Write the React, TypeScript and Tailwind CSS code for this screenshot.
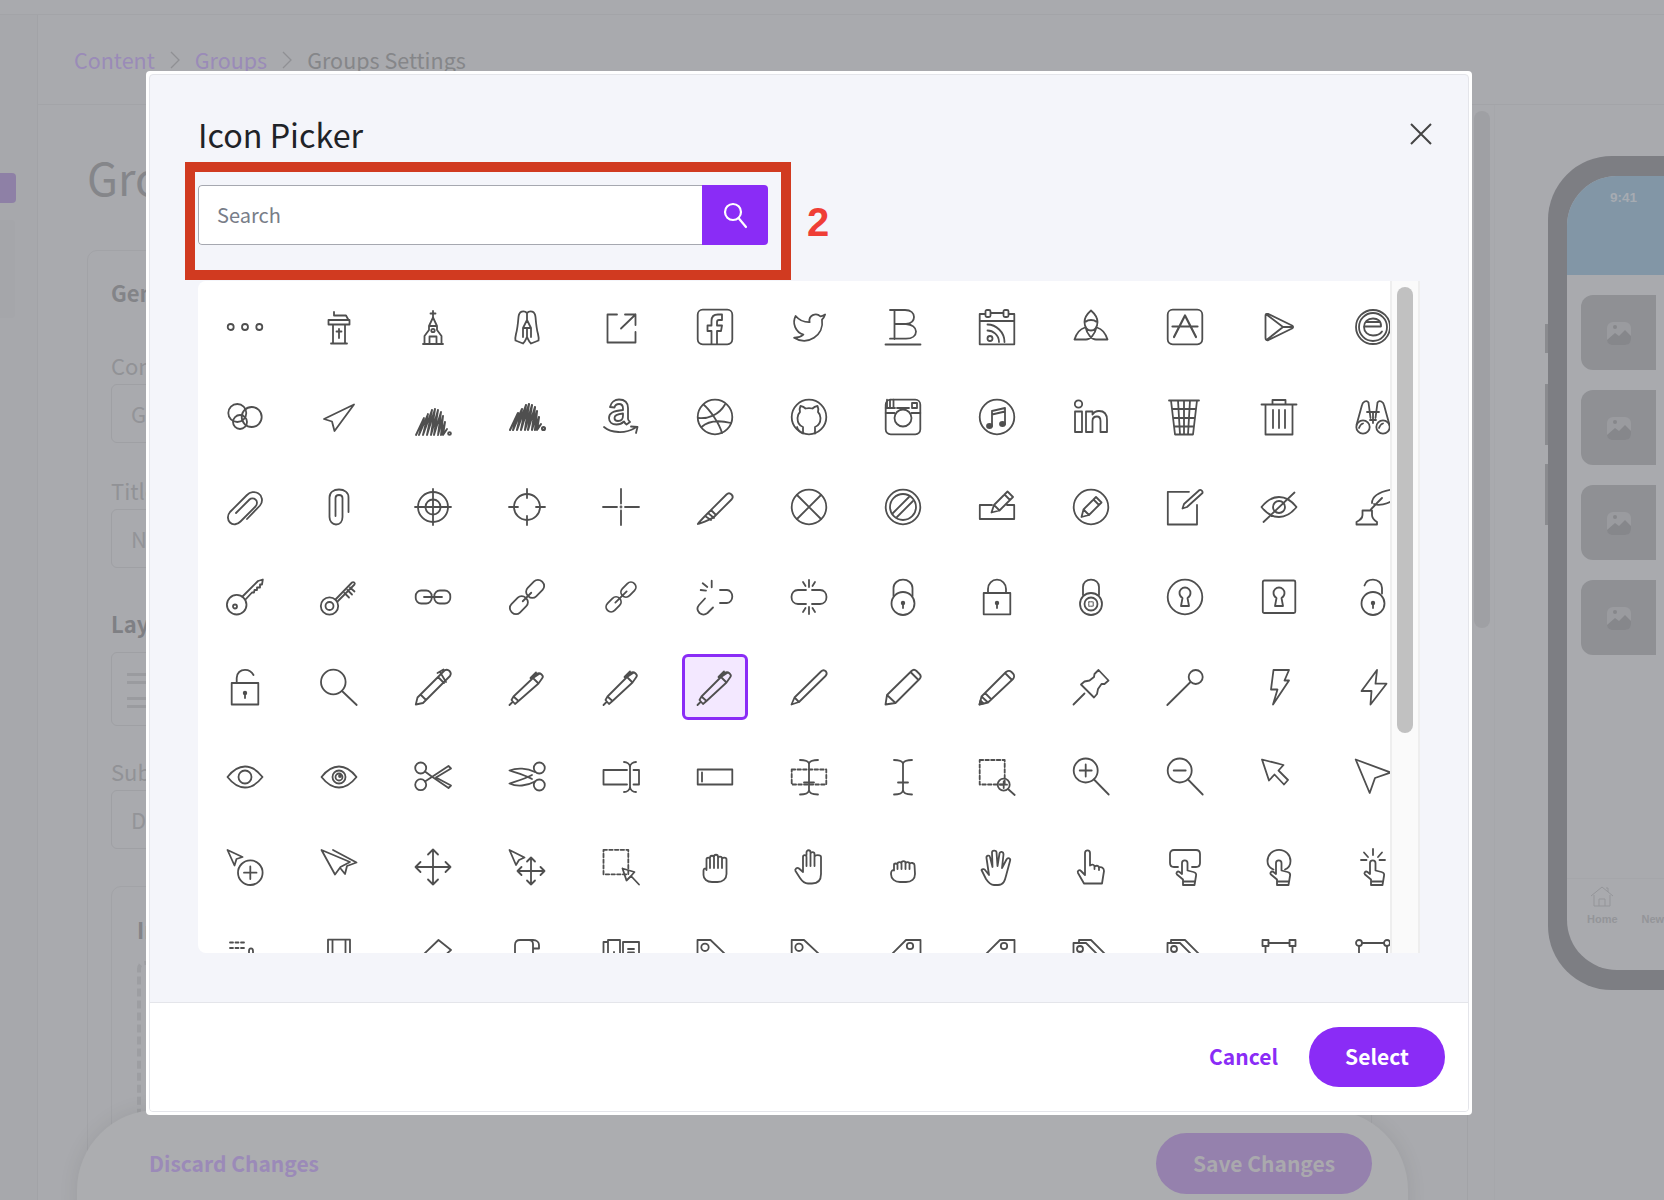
import React from "react";

const D = ({ d }: { d: string }) => <path d={d} />;
const C = ({ x = 18, y = 18, r }: { x?: number; y?: number; r: number }) => <circle cx={x} cy={y} r={r} />;
const Hole = ({ x = 18, y = 24 }: { x?: number; y?: number }) => (
  <g>
    <circle cx={x} cy={y} r={1.3} fill="#4f4f4f" />
    <path d={`M${x} ${y}v5`} strokeWidth={1.8} />
  </g>
);
const Keyhole = () => <D d="M15.5 19 C13 17.5 12.5 15.5 12.5 14 C12.5 11 15 8.5 18 8.5 C21 8.5 23.5 11 23.5 14 C23.5 15.5 23 17.5 20.5 19 L22 27 H14 Z" />;
const FINGER = "M16 30.5 L10 25.5 C8.5 24 10.5 21.5 12.5 23 L15 25 V14 C15 10.5 20.5 10.5 20.5 14 V21.5 L26.5 23 C28.5 23.5 29.5 25 29 27 L27.5 36 H16 Z M16.5 32.5 H28";
const SCRIBBLE = "M1 36 L9 19 L4 36 L13 15 L8 36 L17 11 L12 36 L20 10 L16 36 L23 11 L19 36 L26 13 L23 36 L28 17 L26 36 L30 23 L28 36 L32 30";

const icons: React.ReactNode[] = [
  // row 1
  <><C x={3.7} r={3} /><C r={3} /><C x={32.3} r={3} /></>,
  <D d="M13 3v3.5 M13 6.5h12l2.5 4.5 M7.5 11h21v4.5h-21z M12 15.5V34 M24 15.5V34 M10 34.5h16 M18 20v9 M15.5 22.5h5" />,
  <><D d="M18 2v7 M15.5 4.5h5 M18 8.5L14 17V21L9.5 27V35 M18 8.5L22 17V21L26.5 27V35 M8 35h20 M14.5 35V27.5h7V35 M14 17h8" /><C y={21.5} r={1.7} /></>,
  <D d="M18 4C15 1 10 2 9.5 8C9 14 8.5 20 7 25C6.5 27 6 29 6.5 31.5L14 34.5C16 33 17 30 18 28C19 30 20 33 22 34.5L29.5 31.5C30 29 29.5 27 29 25C27.5 20 27 14 26.5 8C26 2 21 1 18 4Z M18 4V11 M18 11L14 19V28 M18 11L22 19V28 M14 19H22 M18 19V28" />,
  <D d="M14 5.5H4.5V33.5H32.5V23 M32.5 5.5L18 19.5 M22 5.5H32.5V16" />,
  <><rect x={0.7} y={0.7} width={34.6} height={34.6} rx={5} /><D d="M14.5 35V22H10.5V16.5H14.5V12C14.5 7.5 17 5.5 21 5.5H25V11H22C20.5 11 20 12 20 13V16.5H25L24 22H20V35" /></>,
  <path transform="scale(1.55) translate(0 -0.5)" strokeWidth={1.15} d="M22 4s-.7 2.1-2 3.4c1.6 10-9.4 17.3-18 11.6 2.2.1 4.4-.6 6-2C3 15.5.5 9.6 3 5c2.2 2.6 5.6 4.1 9 4-.9-4.2 4-6.6 7-3.8 1.1 0 3-1.2 3-1.2z" />,
  <D d="M5 1h15c6 0 9 3.2 9 7 0 3.8-3 6.5-8 7 6 .3 10 3.5 10 7.5 0 4-3.5 7.2-10 7.2H5 M9.5 1v29 M9.5 15h11 M.5 35.5h35" />,
  <><D d="M6 5H.7V35.3H35.3V5H30 M12 4H24 M.7 12H35.3 M8.5 15.5C17 15.5 25.5 23 25.5 33 M8.5 21.5C14 21.5 20 26 20 33" /><rect x={6.5} y={1} width={5} height={7} rx={1.5} /><rect x={24.5} y={1} width={5} height={7} rx={1.5} /><C x={11} y={29.5} r={2.5} /></>,
  <D d="M18 1.5C14 5 11.5 9 11.5 13C11.5 18.5 14.5 21.5 18 21.5C21.5 21.5 24.5 18.5 24.5 13C24.5 9 22 5 18 1.5Z M1.5 30.5H13C17 30.5 22 25.5 23.5 18 M34.5 30.5H23C19 30.5 14 25.5 12.5 18 M1.5 30.5C3.5 24 7 20 12 18.5 M34.5 30.5C32.5 24 29 20 24 18.5 M13 12.5C15 10.5 21 10.5 23 12.5" />,
  <><rect x={0.7} y={0.7} width={34.6} height={34.6} rx={5} /><path strokeWidth={2.2} d="M7 28L18 6.5L29 28 M5.5 17.5H30.5" /></>,
  <D d="M5.5 5C4.5 5 4.5 6 4.5 7V29C4.5 31 6 32 7.5 31L31 19.5C32.5 18.5 32.5 17.5 31 16.5L7.5 5Z M5.5 5.5L22 18L5.5 31 M22 18H32" />,
  <><C r={17} /><C r={14} /><D d="M9 17.5H26C26.5 12 22.5 9.5 18 9.5C12.5 9.5 9 13 9 18C9 23 13 26.5 18 26.5C21.5 26.5 25 25.5 27 22.5 M11.5 13H24" /></>,
  // row 2
  <><C x={10.3} y={14} r={9} /><C x={24.7} y={18} r={10} /><C x={13} y={23} r={7} /></>,
  <D d="M33 5.5L3 20L11 22.5L13.5 32Z" />,
  <g strokeWidth={1.9}><D d={SCRIBBLE} /><C x={34.5} y={34.5} r={1.4} /></g>,
  <g transform="translate(0 -5)" strokeWidth={2.1}><D d={SCRIBBLE} /><C x={34.5} y={34.5} r={1.5} /></g>,
  <D d="M7 8C8 3 12 .5 16 .5C22 .5 25 3.5 25 9V20C25 21 26 22 27 23L23.5 25.5C22 24.5 21.5 23.5 21 22.5C19 24.5 16.5 25.5 13.5 25.5C9 25.5 6 23 6 19C6 14 10 12 20 11V9.5C20 6.5 18.5 5 16 5C13.5 5 12 6.5 11.5 8.5Z M20 14.5C14 15 11.5 16.5 11.5 19C11.5 21 13 22 15 22C18 22 20 20 20 16.5Z M1 28C8 34 22 35 32 29 M28 27.5L34.5 28L33 34" />,
  <><C r={17.3} /><D d="M6.5 5.5C13 11 22 24 25 34 M.8 19C11 20 22 16 28 5.5 M4.5 28C11 22 22 21 34 24" /></>,
  <><C r={17.3} /><D d="M12 34.5C9 33 6.5 30 6 28 M12 34.5V28C9 27 6.5 24 6.5 19C6.5 16.5 7.5 14.5 9 13C8.5 11 8.5 9 9.5 7C12 7.5 13.5 8.5 14.5 9.5C16.5 9 19.5 9 21.5 9.5C22.5 8.5 24 7.5 26.5 7C27.5 9 27.5 11 27 13C28.5 14.5 29.5 16.5 29.5 19C29.5 24 27 27 24 28V34.5" /></>,
  <><rect x={0.7} y={0.7} width={34.6} height={34.6} rx={5} /><C y={19} r={8.5} /><D d="M.7 14H9.5 M26.5 14H35.3 M5 .7V9 M8.5 .7V9 M2 .7V9 M.7 9H10 M12 9H24" /><rect x={27} y={4} width={5} height={5} /></>,
  <><C r={17.3} /><D d="M13 12L26 9V25 M13 12V27 M13 15.5L26 12.5" /><ellipse cx={10.5} cy={27} rx={2.5} ry={2} fill="#4f4f4f" /><ellipse cx={23.5} cy={25} rx={2.5} ry={2} fill="#4f4f4f" /></>,
  <><C x={5.5} y={5} r={3.7} /><D d="M2 12.5H9V33H2Z M13 12.5H19.5V15.5C21 13 23.5 12 26 12C31.5 12 34 15.5 34 21V33H27.5V22C27.5 19.5 26.5 17.5 24 17.5C21 17.5 19.5 19.5 19.5 22V33H13Z" /></>,
  <D d="M2 1.5H32 M4 1.5L8 35.5H26L30 1.5 M5 10H29 M6 19H28 M7 27.5H27 M11 1.5L13 35.5 M17 1.5V35.5 M23 1.5L21 35.5" />,
  <D d="M.5 5.5H35.5 M11.5 5.5V1H24.5V5.5 M4.5 5.5V35.5H31.5V5.5 M12 11V29 M18 11V29 M24 11V29" />,
  <><C x={8} y={28} r={6.7} /><C x={28} y={28} r={6.7} /><D d="M1.5 26L7 6C7.5 3 11.5 .5 13.5 3.5L15.5 19 M34.5 26L29 6C28.5 3 24.5 .5 22.5 3.5L20.5 19 M12 13H24 M15 21H21 M18 13V24 M4 29C5 26 6 25 8 24.5 M24 29C25 26 26 25 28 24.5" /></>,
  // row 3
  <D d="M20 30L33 16.5C36.5 12.5 35 6.5 31.5 4.5C28 2 23 3 20 6L3 23C0 26.5 .5 31 3 33.5C6 36.5 10.5 35.5 13.5 32.5L28.5 17.5C30.5 15 30.5 12 28.5 10.5C27 9 24 9 22.5 10.5L9 24" />,
  <D d="M27.5 23V8.5C27.5 3.5 23.5 .5 18 .5C12.5 .5 8.5 3.5 8.5 8.5V28C8.5 32.5 11.5 35.5 15 35.5C19 35.5 21.5 32.5 21.5 28V9C21.5 7 20 6 18 6C16 6 14.5 7 14.5 9V27" />,
  <><C r={15} /><C r={7.5} /><D d="M18 0V36 M0 18H36" /></>,
  <><C r={13} /><D d="M18 0V9 M18 27V36 M0 18H9 M27 18H36" /></>,
  <><C r={0.5} /><D d="M18 0V14.5 M18 21.5V36 M0 18H14 M22 18H36" /></>,
  <D d="M.8 35C7 33 14 31 18 27L34.5 10.5C36 9 36 7 34.5 5.5C33 4 31 4 29.5 5.5L11 24C6.5 28.5 3 32 .8 35Z M11 24L17 29 M14 21L19 26 M8 27L14 31" />,
  <><C r={17.3} /><D d="M6 6L30 30 M30 6L6 30" /></>,
  <><C r={17.3} /><C r={13} /><D d="M8 24L24 8 M12 28L28 12" /></>,
  <D d="M13 16H.8V30H35.2V16H28 M12.5 23.5L15 16L28.5 2.5L34 8L20.5 21.5Z M25.5 5.5L31 11 M15 16L20.5 21.5" />,
  <><C r={17.3} /><D d="M8.5 28L10.5 20.5L23 8L28.5 13.5L16 26Z M20.5 10.5L26 16 M10.5 20.5L16 26" /></>,
  <D d="M22 2.8H.8V35.5H30V16 M15.5 19.5L17 15L32.5 1C34 .5 36 2 35.5 4L20 18Z" />,
  <><D d="M.5 18C6 11 12 8 18 8C24 8 30 11 35.5 18C30 25 24 28 18 28C12 28 6 25 .5 18Z M33.5 3.5L2.5 33" /><C r={6} /></>,
  <D d="M1.5 35.5H22V33C19 31 17 29.5 17 26V21.5H7.5V26C7.5 29.5 5 31 1.5 33Z M15 21.5C18 18 22 14 27 9 M17 14C17 8 23 3 37 .5 M37 12C32 15 24 17 19 15" />,
  // row 4
  <><C x={9.7} y={25.7} r={9.8} /><C x={8} y={27.5} r={2} /><D d="M15.5 17.5L31 2L35.8 .5L35 5.5H33V8.5H30V11H27.5L27 13.5H25L18.5 20.5" /></>,
  <><C x={8.5} y={27} r={8.7} /><C x={8.5} y={27} r={4} /><D d="M14.5 20.5L31 3.5C32.5 2.5 34.5 4 33.5 5.5L16.5 22.5 M23.5 14L28 18.5 M26.5 11L31 15.5 M29 8.5L33.5 12.5" /></>,
  <><rect x={0.7} y={11.5} width={16} height={13} rx={5.5} /><rect x={19.3} y={11.5} width={16} height={13} rx={5.5} /><D d="M9 18H27" /></>,
  <g transform="rotate(-45 18 18)"><rect x={-3.5} y={12} width={20} height={12} rx={5.5} /><rect x={19.5} y={12} width={20} height={12} rx={5.5} /><path d="M12 18H24" /></g>,
  <g transform="rotate(-45 18 18)"><rect x={-1} y={13} width={17} height={10} rx={5} /><rect x={20} y={13} width={17} height={10} rx={5} /><path d="M10 18H26" /></g>,
  <D d="M23 11H30C33 11 35.3 14 35.3 17.5C35.3 21 33 24 30 24H23 M8 19.5L2 26C-.5 29 .5 32 2.5 34C5 36 8 36 10.5 34L16 28.5 M14.7 1.7V8.3 M5.7 4.3L10.3 8 M3.7 11L9 11.7" />,
  <D d="M15 11H7C3 11 .5 14 .5 18C.5 22 3 25 7 25H15 M21 11H29C33 11 35.5 14 35.5 18C35.5 22 33 25 29 25H21 M18 1V8 M12 3L14.5 7 M24 3L21.5 7 M18 28V35 M12 33L14.5 29 M24 33L21.5 29" />,
  <><C y={24.5} r={11.5} /><D d="M8.5 17V9C8.5 4 13 .7 18 .7C23 .7 27.5 4 27.5 9V17" /><Hole /></>,
  <><D d="M4.7 14H31.3V35.3H4.7Z M9 14V10C9 4.5 13 .7 18 .7C23 .7 27 4.5 27 10V14" /><Hole /></>,
  <><C y={25} r={11} /><C y={25} r={6.5} /><D d="M10 16V8C10 3.5 13.5 .7 18 .7C22.5 .7 26 3.5 26 8V16" /><rect x={15.8} y={22.8} width={4.4} height={4.4} strokeWidth={1} strokeDasharray="1.2 0.8" /></>,
  <><C r={17.3} /><Keyhole /></>,
  <><rect x={1.8} y={1.5} width={32.5} height={32.5} rx={1.5} /><Keyhole /></>,
  <><C y={24.5} r={11.5} /><D d="M9.5 6.5C10.5 3 13.5 .7 18 .7C23 .7 27 4 27 9V14.5" /><Hole /></>,
  // row 5
  <><D d="M4.7 14H31.3V35.5H4.7Z M9.7 14V9C9.7 4 13.5 .8 18 .8C22 .8 25 3 26.5 6" /><Hole /></>,
  <><C x={12.3} y={13} r={12.3} /><D d="M21 22L35.7 36" /></>,
  <D d="M.8 35.5L2.5 28.5L5.5 25.5L11 31L8 34Z M5.5 25.5L25 6 M11 31L31 11 M25 6L29.5 1.5C31 .5 33 .5 34.5 2C36 3.5 36 5.5 35 7L31 11 M23 8L29 14 M22.5 4L28.5 .5 M25 3L31 13" />,
  <D d="M.5 36L3 33.5 M2.5 31L6 35L9.5 32L4.5 27.5Z M4.5 27.5L24 9L29.5 14.5L9.5 32 M24 9L28 5C29 4 31 4 32 5L33 6C34 7 34 8.5 33 9.5L29.5 14.5 M21.5 9L27 3.5 M24 9L30 5" />,
  <D d="M.5 36L3 33.5 M2.5 31L6 35L9.5 32L4.5 27.5Z M4.5 27.5L24 8L29.5 13.5L9.5 32 M24 8L28 4C29 3 31 3 32 4L33 5C34 6 34 7.5 33 8.5L29.5 13.5 M21.5 8L27 2.5 M24 8L30 4" />,
  <D d="M.5 36L3 33.5 M2.5 31L6 35L9.5 32L4.5 27.5Z M4.5 27.5L24 8L29.5 13.5L9.5 32 M24 8L28 4C29 3 31 3 32 4L33 5C34 6 34 7.5 33 8.5L29.5 13.5 M21.5 8L27 2.5 M24 8L30 4" />,
  <D d="M.5 35.5L3.5 28.5L30 2.5C31.5 1 33.5 1 35 2.5C36 4 36 5.5 34.5 7L8 33Z M3.5 28.5L8 33" />,
  <D d="M.5 35.5L2 26L26.5 2C28 .5 30 .5 31.5 2L34.5 5C36 6.5 36 8.5 34.5 10L10.5 34Z M2 26L10.5 34 M25.5 3L33.5 11" />,
  <><D d="M.5 35.5L2.5 27.5L27 3C29 1.5 31 1.5 32.5 3L34 4.5C35.5 6 35.5 8.5 34 10L9 33.5Z M2.5 27.5L9 33.5 M6 24L12 30 M26 4L33 11" /><path d="M.5 35.5L1.5 31.5L4.5 34.5Z" fill="#4f4f4f" /></>,
  <D d="M25.5 1L35.5 11.5L31.5 15L28.5 15L25 20L24 25L21 28.5L8 15.5L11.5 12.5L16.5 11.5L21 8L21.5 5Z M.5 35.5L11.5 24.5" />,
  <><C x={28.7} y={8} r={7} /><D d="M.3 36L23.5 13" /></>,
  <D d="M12.5 1H28L23.5 11.5H28L12 35.5L16.5 20.5H10Z" />,
  <D d="M22 1L6.5 22H16.5L15.5 35.5L31.5 14.7H20.5Z" />,
  // row 6
  <><D d="M.5 18C6 11 12 7.5 18 7.5C24 7.5 30 11 35.5 18C30 25 24 28.5 18 28.5C12 28.5 6 25 .5 18Z" /><C r={6.5} /></>,
  <><D d="M.5 18C6 11 12 7.5 18 7.5C24 7.5 30 11 35.5 18C30 25 24 28.5 18 28.5C12 28.5 6 25 .5 18Z" /><C r={6.5} /><C r={3.5} /><C x={19} y={17} r={1} /></>,
  <><C x={5.7} y={9} r={5.5} /><C x={5.7} y={25.7} r={5.5} /><D d="M10 22.5L33.5 7L36 9.5L21 18.5 M10 12.5L16 17 M21 18.5L36 26.5L33.5 29L16 17" /></>,
  <><C x={30.3} y={9} r={5.5} /><C x={30.3} y={26} r={5.5} /><D d="M26 13C18 9 8 8.5 .5 11.5C8 14 16 16 23 20 M26 22.5C18 27 8 28 .5 24.5C8 22 16 20 23 16" /></>,
  <D d="M24 11H.5V25.5H24 M30.5 11H36V25.5H30.5 M21 3C24 3 27 5 27 8C27 5 30 3 33 3 M21 33C24 33 27 31 27 28C27 31 30 33 33 33 M27 8V28" />,
  <><rect x={0.7} y={10.5} width={34.6} height={15} /><D d="M5 13.5V22.5" /></>,
  <><rect x={0.7} y={10.5} width={34.6} height={15} strokeDasharray="3.5 2.2" /><D d="M9 1C13 1 18 2 18 5C18 2 23 1 27 1 M9 35.5C13 35.5 18 34.5 18 31C18 34.5 23 35.5 27 35.5 M18 5V31 M13 23.5H23" /></>,
  <D d="M9 1C13 1 18 2 18 5C18 2 23 1 27 1 M9 35.5C13 35.5 18 34.5 18 31C18 34.5 23 35.5 27 35.5 M18 5V31 M13 23.5H23" />,
  <><rect x={0.7} y={1} width={25} height={24.5} strokeDasharray="3.5 2.2" /><C x={24.7} y={25.7} r={6} /><D d="M29 30L35.7 36 M24.7 22.5V29 M21.5 25.7H28" /></>,
  <><C x={12.7} y={11.5} r={12} /><D d="M21 20.5L35.7 35.5 M12.7 5.5V17.5 M6.7 11.5H18.7" /></>,
  <><C x={12.7} y={11.5} r={12} /><D d="M21 20.5L35.7 35.5 M6.7 11.5H18.7" /></>,
  <D d="M1 .5L22.5 6L17.5 11.5L27 21L23 25.5L13.5 15.5L8 21.5Z" />,
  <D d="M.7 .5L35.5 13.5L20 19L14.7 34Z" />,
  // row 7
  <><D d="M.5 1L15.5 8L9.5 10L7.5 16.5Z M23.3 17.5V30 M17 23.7H29.5" /><C x={23.3} y={23.7} r={12.3} /></>,
  <D d="M.5 1L29 13L19.5 18L14 25.5Z M12 1L35.5 13.5L26 17L24 25L20 20" />,
  <D d="M18 .5V35.5 M.5 18H35.5 M13 5.5L18 .5L23 5.5 M13 30.5L18 35.5L23 30.5 M5.5 13L.5 18L5.5 23 M30.5 13L35.5 18L30.5 23" />,
  <D d="M.5 1L15.5 8.5L10 11L7 16Z M22 8.5V35.5 M8.5 22H35.5 M18 12.5L22 8.5L26 12.5 M18 31.5L22 35.5L26 31.5 M12.5 18L8.5 22L12.5 26 M31.5 18L35.5 22L31.5 26" />,
  <><rect x={0.5} y={0.8} width={24.8} height={24.5} strokeDasharray="3.5 2.2" /><D d="M19.5 19.5L31.5 23L28 27L36 35.5 M19.5 19.5L23.5 31.5L28 27" /></>,
  <D d="M9.5 21V10.5C9.5 8 13 8 13 10.5V19 M13 9C13 6 17 6 17 9V19 M17 8C17 5 21 5 21 8V19 M21 9.5C21 7 25 7 25 9.5V19 M25 10.5C25 8 29.5 8 29.5 10.5V25C29.5 30 25.5 33 20.5 33H15C10 33 6.5 30 6.5 26V21.5C6.5 19.5 8.5 19 9.5 20.5" />,
  <D d="M12 23V8C12 5.5 15.5 5.5 15.5 8V17 M15.5 6V3.5C15.5 .5 19.5 .5 19.5 3.5V17 M19.5 5C19.5 2.5 23.5 2.5 23.5 5V17 M23.5 8C23.5 5.5 30 5.5 30 8V25C30 31 27 34.5 21 34.5H17C13 34.5 11 32 9 29L4.5 22C3.5 20 6 18 8 19.5L12 23" />,
  <D d="M9 21.5V16C9 14 12.5 14 12.5 16V20 M12.5 15C12.5 12.5 16.5 12.5 16.5 15V20 M16.5 14C16.5 11.5 20.5 11.5 20.5 14V20 M20.5 15C20.5 12.5 24.5 12.5 24.5 15V20 M24.5 15C25.5 13 29.5 14 29.5 16L30 25C30 30 26.5 33 21 33H15C10 33 6 30 6 25C6 22 7.5 20.5 9 21.5" />,
  <D d="M2.5 21C3.5 19.5 5.5 20 6.5 21.5L10 26L7.5 9C7 6.5 10.5 5.5 11 8L13.5 18L13 3.5C13 1 17 1 17.5 3L18.5 17L20.5 4.5C21 2 24.5 2.5 24.5 5.5L23 19L27.5 10.5C29 8 32 9.5 31 12L27.5 25C26 31 25 36 19 36H15C11 36 9 33 7 30Z" />,
  <D d="M11 34.5L5 24C4 22 6.5 20 8 22L12 26V4C12 .5 17 .5 17 4V16.5C19.5 15 21.5 15.5 21.5 18V20 M21.5 17.5C24 16 26 17 26 19V21 M26 18.5C28.5 17.5 31 19 31 22L29 34.5H11" />,
  <><D d="M11 18H7C4.5 18 3 16.5 3 14V5C3 2.5 4.5 1 7 1H29C31.5 1 33 2.5 33 5V14C33 16.5 31.5 18 29 18H25" /><D d={FINGER} /></>,
  <><D d="M12.5 20.5C8.5 19 6.5 15.5 6.5 12C6.5 6 11.5 .8 18 .8C24.5 .8 29.5 6 29.5 12C29.5 15.5 27.5 19 24 20.5" /><D d={FINGER} /></>,
  <><D d="M18 0V6 M9 3.5L13 8 M27 3.5L23 8 M6 11H11.5 M24.5 11H30" /><D d={FINGER} /></>,
  // row 8
  <D d="M3 3.5H6 M8.5 3.5H11.5 M14 3.5H17 M3 9H6 M8.5 9H11.5 M14 9H17 M22 18V12C22 8.5 26 8.5 26 12V18" />,
  <D d="M7 18V.7H29V18 M11.5 .7V18 M24.5 .7V18" />,
  <D d="M9 15L23.5 1L36 11L31.5 15" />,
  <D d="M6 15V6C6 2.5 8 1 11 1H24C28 1 30 3.5 30 6V9.5H24V15 M24 9.5V5C24 2 22 1 20 1" />,
  <D d="M.5 15V3H5V1H17V15 M5 3V15 M20 3H36V15 M20 3V15 M25 10H31 M25 13.5H31 M11 13V15" />,
  <><D d="M.5 15V1H13.5L28 15" /><C x={8} y={8.3} r={3.7} /></>,
  <><D d="M.7 15V1H13L28 15" /><C x={8} y={8.3} r={3.7} /></>,
  <><D d="M7 15L21 1H35.5V15" /><C x={25} y={7} r={3.2} /></>,
  <><D d="M7 15L21 1H35.5V15" /><C x={25} y={7} r={3.2} /></>,
  <><D d="M.5 15V4H13L24 15 M6 4V1H18L32 15" /><C x={7} y={10} r={3} /></>,
  <><D d="M.5 15V4H13L24 15 M4 4V1H18L32 15" /><C x={7} y={10} r={3} /></>,
  <><rect x={1.5} y={1} width={6} height={6} /><rect x={28.5} y={1} width={6} height={6} /><D d="M7.5 4H28.5 M4.5 7V15 M31.5 7V15" /></>,
  <><C x={4} y={4} r={3} /><C x={32} y={4} r={3} /><D d="M7 4H29 M4 7V15 M32 7V15" /></>,
];

const SELECTED = 57;

function Phone() {
  return (
    <div className="relative mt-[51px] h-[834px] w-[400px] shrink-0 rounded-[64px] bg-[#7d7e83] px-[19px] py-[20px]">
      <div className="absolute -left-[3px] top-[168px] h-[29px] w-[3px] bg-[#8a8b8f]" />
      <div className="absolute -left-[3px] top-[228px] h-[61px] w-[3px] bg-[#8a8b8f]" />
      <div className="absolute -left-[3px] top-[308px] h-[61px] w-[3px] bg-[#8a8b8f]" />
      <div className="flex h-full flex-col overflow-hidden rounded-[50px] bg-[#a9aaae]">
        <div className="h-[99px] bg-[#8296a6] pl-[43px] pt-[12px] font-['Liberation_Sans',sans-serif] text-[13.5px] font-bold text-[#a6abb2]">9:41</div>
        <div className="flex flex-1 flex-col gap-[20px] pl-[14px] pt-[20px]">
          {[0, 1, 2, 3].map((i) => (
            <div key={i} className="flex h-[75px] w-[75px] items-center justify-center rounded-l-[12px] bg-[#8f9094]">
              <svg width="26" height="26" viewBox="0 0 26 26">
                <rect x="1" y="2" width="24" height="23" rx="6" fill="#9a9b9f" />
                <path d="M1 20L9 13L13 16L19 10L25 16V19C25 22 23 25 19 25H7C4 25 1 23 1 20Z" fill="#86878b" />
                <circle cx="9" cy="7" r="2" fill="#86878b" />
              </svg>
            </div>
          ))}
        </div>
        <div className="flex h-[92px] gap-[24px] border-t border-[#a5a6aa] pl-[20px] pt-[6px] font-['Liberation_Sans',sans-serif] text-[11px] font-bold text-[#949599]">
          <div className="flex flex-col items-center">
            <svg width="24" height="24" viewBox="0 0 24 24" fill="none" stroke="#949599" strokeWidth="1">
              <path d="M1 11L12 2L23 11 M18 7V3H16 M4 10V21H20V10 M9 21V14H15V21" />
            </svg>
            <span className="mt-[2px]">Home</span>
          </div>
          <span className="pt-[26px]">New</span>
        </div>
      </div>
    </div>
  );
}

function Field({ label, value }: { label: string; value: string }) {
  return (
    <div className="mb-[33px]">
      <div className="h-[28px] text-[22px] leading-[28px] text-[#919296]">{label}</div>
      <div className="mt-[5px] flex h-[59px] items-center rounded-[6px] border border-[#9fa0a4] pl-[19px] text-[22px] text-[#939498]">{value}</div>
    </div>
  );
}

function Background() {
  return (
    <div className="flex h-full flex-col">
      <div className="h-[15px] shrink-0 border-b border-[#a3a4a8]" />
      <div className="flex min-h-0 flex-1">
        <aside className="w-[38px] shrink-0 border-r border-[#a2a3a7] bg-[#a7a8ac] pt-[158px]">
          <div className="h-[30px] w-[16px] rounded-r-[4px] bg-[#8e80a6]" />
          <div className="mt-[17px] h-[98px] w-[15px] rounded-r-[4px] bg-[#a5a6aa]" />
        </aside>
        <main className="flex min-w-0 flex-1 flex-col">
          <div className="flex h-[90px] shrink-0 items-center gap-[15px] border-b border-[#a3a4a8] pl-[36px] pt-[1px] text-[21.5px] text-[#9a8bb8]">
            <span>Content</span>
            <svg width="10" height="18" viewBox="0 0 10 18" fill="none" stroke="#8f9094" strokeWidth="1.3"><path d="M1 1L9 9L1 17" /></svg>
            <span>Groups</span>
            <svg width="10" height="18" viewBox="0 0 10 18" fill="none" stroke="#8f9094" strokeWidth="1.3"><path d="M1 1L9 9L1 17" /></svg>
            <span className="text-[#858689]">Groups Settings</span>
          </div>
          <div className="flex min-h-0 flex-1">
            <section className="w-[1436px] shrink-0 overflow-hidden pl-[49px] pr-[6px]">
              <div className="mt-[40px] h-[64px] text-[45px] leading-[64px] text-[#85868a]">Gro</div>
              <div className="mt-[41px] h-[1000px] rounded-[10px] border border-[#a2a3a7] px-[23px] pt-[27px]">
                <div className="mb-[45px] h-[28px] text-[22px] font-semibold leading-[28px] text-[#838488]">General</div>
                <Field label="Content Type" value="Groups" />
                <Field label="Title" value="New Group" />
                <div className="mt-[41px] h-[28px] text-[22px] font-semibold leading-[28px] text-[#7f8084]">Layout</div>
                <div className="mt-[15px] mb-[31px] flex h-[74px] w-[200px] flex-col gap-[5px] rounded-[6px] border border-[#9fa0a4] pl-[15px] pt-[20px]">
                  <div className="h-[3px] w-[60px] bg-[#9a9b9f]" />
                  <div className="h-[3px] w-[60px] bg-[#9a9b9f]" />
                  <div className="mt-[8px] h-[3px] w-[60px] bg-[#9a9b9f]" />
                  <div className="h-[3px] w-[60px] bg-[#9a9b9f]" />
                </div>
                <Field label="Subtitle" value="Description" />
                <div className="mr-[72px] mt-[37px] h-[400px] rounded-[10px] border border-[#a2a3a7] px-[25px] pt-[28px]">
                  <div className="h-[28px] text-[22px] font-semibold leading-[28px] text-[#838488]">Image</div>
                  <div className="mt-[18px] h-[300px] rounded-[8px] border-4 border-dashed border-[#9d9ea2]" />
                </div>
              </div>
            </section>
            <div className="mt-[6px] h-[517px] w-[16px] shrink-0 rounded-full bg-[#9fa0a4]" />
            <div className="ml-[4px] flex flex-1 border-l border-[#a6a7ab] pl-[53px]">
              <Phone />
            </div>
          </div>
        </main>
      </div>
    </div>
  );
}

function IconPicker() {
  return (
    <div className="absolute left-[146px] top-[71px] h-[1044px] w-[1326px] rounded-[4px] bg-white p-[3px]">
      <div className="relative flex h-full flex-col overflow-hidden rounded-[4px] border border-[#e4e5ea] bg-[#f4f5fa]">
        <div className="flex h-[927px] flex-col pl-[48px] pr-[49px] pt-[37px]">
          <div className="flex items-start justify-between">
            <h2 className="h-[45px] text-[32.3px] leading-[45px] text-[#1f2328]">Icon Picker</h2>
            <button className="mr-[-14px] mt-[10px] flex h-[24px] w-[24px] items-center justify-center">
              <svg width="22" height="22" viewBox="0 0 22 22" fill="none" stroke="#444" strokeWidth="2"><path d="M1 1L21 21 M21 1L1 21" /></svg>
            </button>
          </div>
          <div className="mt-[28px] flex h-[60px] w-[570px] overflow-hidden rounded-[4px]">
            <div className="flex flex-1 items-center rounded-l-[4px] border border-r-0 border-[#a6a8b0] bg-white pl-[18px] text-[20px] text-[#787d88]">Search</div>
            <div className="flex w-[66px] items-center justify-center bg-[#8a2cf6]">
              <svg width="28" height="28" viewBox="0 0 28 28" fill="none" stroke="white" strokeWidth="2.2" strokeLinecap="round"><circle cx="12" cy="11" r="8" /><path d="M17.5 17L25 26" /></svg>
            </div>
          </div>
          <div className="mt-[36px] flex h-[672px] w-[1222px] overflow-hidden rounded-l-[8px] bg-white">
            <div className="h-full w-[1192px] shrink-0 overflow-hidden pl-[14px] pt-[13px]">
              <div className="grid w-[1300px] grid-cols-[repeat(13,66px)] gap-x-[28px] gap-y-[24px]">
                {icons.map((ic, i) => (
                  <div key={i} className={i === SELECTED ? "flex h-[66px] w-[66px] items-center justify-center rounded-[6px] border-[3px] border-[#8a2cf6] bg-[#f3e8ff]" : "flex h-[66px] w-[66px] items-center justify-center"}>
                    <svg width="36" height="36" viewBox="0 0 36 36" fill="none" stroke="#4f4f4f" strokeWidth="1.8" strokeLinejoin="round" strokeLinecap="round" className="overflow-visible">
                      {ic}
                    </svg>
                  </div>
                ))}
              </div>
            </div>
            <div className="h-full flex-1 border-x-2 border-[#eeeeee] bg-[#fafafa] pl-[5px] pt-[6px]">
              <div className="h-[446px] w-[16px] rounded-full bg-[#c1c1c1]" />
            </div>
          </div>
        </div>
        <div className="flex flex-1 items-center justify-end gap-[31px] border-t border-[#e4e5ea] bg-white pr-[23px]">
          <span className="text-[21px] font-semibold text-[#8a2cf6]">Cancel</span>
          <button className="h-[60px] w-[136px] rounded-full bg-[#8a2cf6] text-[21px] font-semibold text-white">Select</button>
        </div>
        <div className="absolute left-[35px] top-[87px] h-[118px] w-[606px] border-[10px] border-[#d13a20]" />
        <div className="absolute left-[657px] top-[124px] font-['Liberation_Sans',sans-serif] text-[40px] font-bold leading-[46px] text-[#ef3e36]">2</div>
      </div>
    </div>
  );
}

export default function App() {
  return (
    <div className="relative h-[1200px] w-[1664px] overflow-hidden bg-[#a9aaae] font-['Noto_Sans_CJK_SC','Noto_Sans',sans-serif]">
      <Background />
      <div className="absolute left-[77px] top-[1110px] flex h-[200px] w-[1331px] items-start justify-between rounded-[80px] bg-[#acadb0] pl-[72px] pr-[36px] pt-[23px] shadow-[0_0_20px_rgba(0,0,0,0.08)]">
        <span className="flex h-[61px] items-center text-[21px] font-semibold text-[#9b8ab8]">Discard Changes</span>
        <button className="h-[61px] w-[216px] rounded-full bg-[#9581ad] text-[21px] font-semibold text-[#aaa9ad]">Save Changes</button>
      </div>
      <IconPicker />
    </div>
  );
}
